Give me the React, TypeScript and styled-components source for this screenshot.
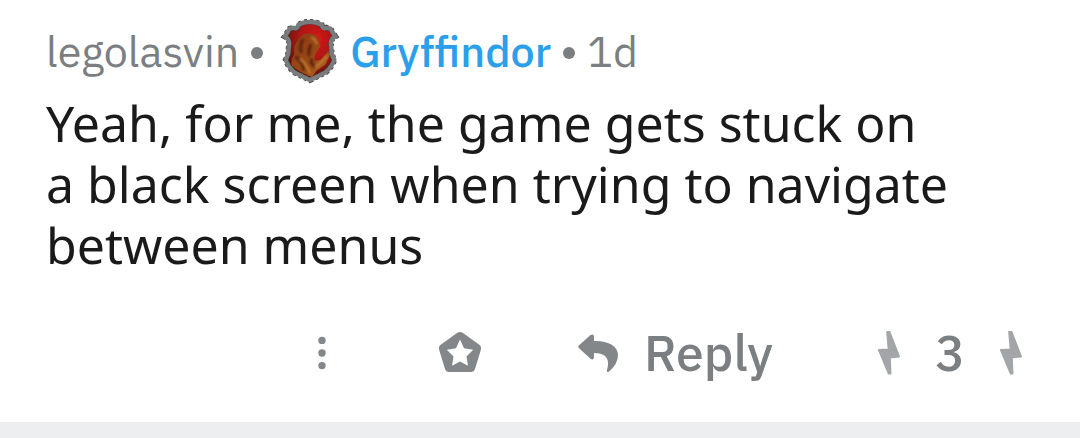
import React from "react";
import styled, { createGlobalStyle } from "styled-components";

const GlobalStyle = createGlobalStyle`
  * { box-sizing: border-box; }
  body { margin: 0; background: #edeeef; }
`;

const plex = `"IBM Plex Sans", Roboto, "Liberation Sans", sans-serif`;

const Comment = styled.article`
  display: flex;
  flex-direction: column;
  padding: 15px 46px 37px;
  background: #fff;
`;

const Meta = styled.header`
  display: flex;
  align-items: center;
  height: 72px;
  font: 400 43px/56px ${plex};
  color: #7c7f82;
`;

const Author = styled.a`
  color: inherit;
  text-decoration: none;
`;

const Flair = styled.span`
  font-weight: 500;
  color: #2ba0ea;
`;

const Dot = styled.span`
  width: 12px;
  height: 12px;
  margin: 4px 12px 0;
  border-radius: 50%;
  background: #7c7f82;
`;

const CrestIcon = styled.svg`
  width: 62px;
  height: 66px;
  margin: 0 9px 0 4px;
`;

const Body = styled.p`
  margin: 6px 0 0;
  font: 400 50px/61px "Noto Sans", sans-serif;
  color: #1a1a1b;
`;

const Actions = styled.footer`
  display: flex;
  align-items: center;
  justify-content: flex-end;
  height: 64px;
  margin-top: 45px;
  color: #7c7f82;
`;

const Action = styled.button<{ $gap: number }>`
  display: flex;
  align-items: center;
  margin: 0 ${(p) => p.$gap}px 0 0;
  padding: 0;
  border: 0;
  background: none;
  color: inherit;
  font: 500 50px/60px ${plex};
`;

const Icon = styled.svg`
  display: block;
  flex: none;
  fill: #83878a;
`;

const ReplyLabel = styled.span`
  margin-left: 24px;
`;

const Score = styled.output`
  margin-right: 34px;
  font: 500 50px/60px ${plex};
`;

const Bolt = () => (
  <Icon width="24" height="48" viewBox="0 0 24 48">
    <path
      d="M10.200 3 L12.500 3 L22 27.500 L12.800 28.500 L13.500 44.500 L11.800 44.500 L2 21 L11.700 20.500 Z"
      fill="#a3a6a9"
      stroke="#a3a6a9"
      strokeWidth="2"
      strokeLinejoin="round"
    />
  </Icon>
);

const shield =
  "M31 4 Q38 4 43 7 Q44 12 48 10 L52 11 L57 19 Q51 22 53 31 Q53 38 56 43 Q54 50 47 56 L31 64 L15 56 Q8 50 6 43 Q9 38 9 31 Q11 22 5 19 L10 11 L14 10 Q18 12 19 7 Q24 4 31 4 Z";

const Crest = () => (
  <CrestIcon viewBox="0 0 62 68" role="img" aria-label="Gryffindor crest">
    <defs>
      <radialGradient id="field" cx="0.62" cy="0.3" r="0.65">
        <stop offset="0" stopColor="#d41c1c" />
        <stop offset="0.5" stopColor="#b01513" />
        <stop offset="1" stopColor="#5e100c" />
      </radialGradient>
      <linearGradient id="lion" x1="0" y1="0" x2="1" y2="1">
        <stop offset="0" stopColor="#8a3a12" />
        <stop offset="0.6" stopColor="#9c4b17" />
        <stop offset="1" stopColor="#b06a26" />
      </linearGradient>
      <filter id="soft">
        <feGaussianBlur stdDeviation="0.6" />
      </filter>
      <filter id="fur">
        <feGaussianBlur stdDeviation="1.2" />
      </filter>
    </defs>
    <g filter="url(#soft)">
      <path d={shield} fill="url(#field)" />
      <path
        d="M19 22 Q23 15 31 16 Q39 17 40 24 L42 29 Q39 32 38 35 Q35 38 36 44 L42 43 L50 34 L52 37 L47 48 L38 54 L33 61 Q20 56 12 49 Q11 42 15 37 Q13 30 19 22 Z"
        fill="url(#lion)"
      />
      <g filter="url(#fur)" fill="none">
        <path
          d="M24 22 Q20 28 22 36 M32 27 Q29 33 30 39 M16 40 Q23 44 25 54 M33 42 Q31 48 36 50"
          stroke="#5c220b"
          strokeWidth="3"
        />
        <path
          d="M32 20 Q37 22 38 27 M37 51 L49 39 M21 42 Q27 47 31 57"
          stroke="#c98038"
          strokeWidth="2"
        />
      </g>
      <path
        d={shield}
        fill="none"
        stroke="#3c3e40"
        strokeWidth="6"
        strokeDasharray="3 3"
      />
      <path d={shield} fill="none" stroke="#797b7d" strokeWidth="4.500" />
    </g>
  </CrestIcon>
);

export default function App() {
  return (
    <>
      <GlobalStyle />
      <Comment>
        <Meta>
          <Author href="#author">legolasvin</Author>
          <Dot />
          <Crest />
          <Flair>Gryffindor</Flair>
          <Dot />
          <time>1d</time>
        </Meta>
        <Body>
          Yeah, for me, the game gets stuck on
          <br />a black screen when trying to navigate
          <br />
          between menus
        </Body>
        <Actions>
          <Action $gap={112} aria-label="More">
            <Icon width="8" height="36" viewBox="0 0 8 36">
              <circle cx="4" cy="5.400" r="3.700" />
              <circle cx="4" cy="18" r="3.700" />
              <circle cx="4" cy="30.600" r="3.700" />
            </Icon>
          </Action>
          <Action $gap={96} aria-label="Give award">
            <Icon width="44" height="44" viewBox="0 0 44 44">
              <path
                fillRule="evenodd"
                d="M19 2 Q22 0.200 25 2 L41 13.500 Q43.800 15.500 42.800 19 L37 38 Q36 41 33 41 L11 41 Q8 41 7 38 L1.200 19 Q0.200 15.500 3 13.500 Z M22 8.500 L18 17.300 L8.800 18.800 L15.500 25.500 L14 34.800 L22 30.500 L30 34.800 L28.500 25.500 L35.200 18.800 L26 17.300 Z"
              />
            </Icon>
          </Action>
          <Action $gap={104}>
            <Icon width="42" height="40" viewBox="0 0 42 40">
              <path d="M0.800 12.600 L12.500 2 Q15.500 0.500 16 3 L16 8 C30 7.500 40 13 40 22 Q40 31 31 38.500 Q28.500 40 29 37 C32 27 29 20 16 20 L16 24.500 Q15.500 27.500 12.500 25.800 L0.800 15 Q-0.300 13.800 0.800 12.600 Z" />
            </Icon>
            <ReplyLabel>Reply</ReplyLabel>
          </Action>
          <Action $gap={34} aria-label="Upvote">
            <Bolt />
          </Action>
          <Score>3</Score>
          <Action $gap={11} aria-label="Downvote">
            <Bolt />
          </Action>
        </Actions>
      </Comment>
    </>
  );
}
